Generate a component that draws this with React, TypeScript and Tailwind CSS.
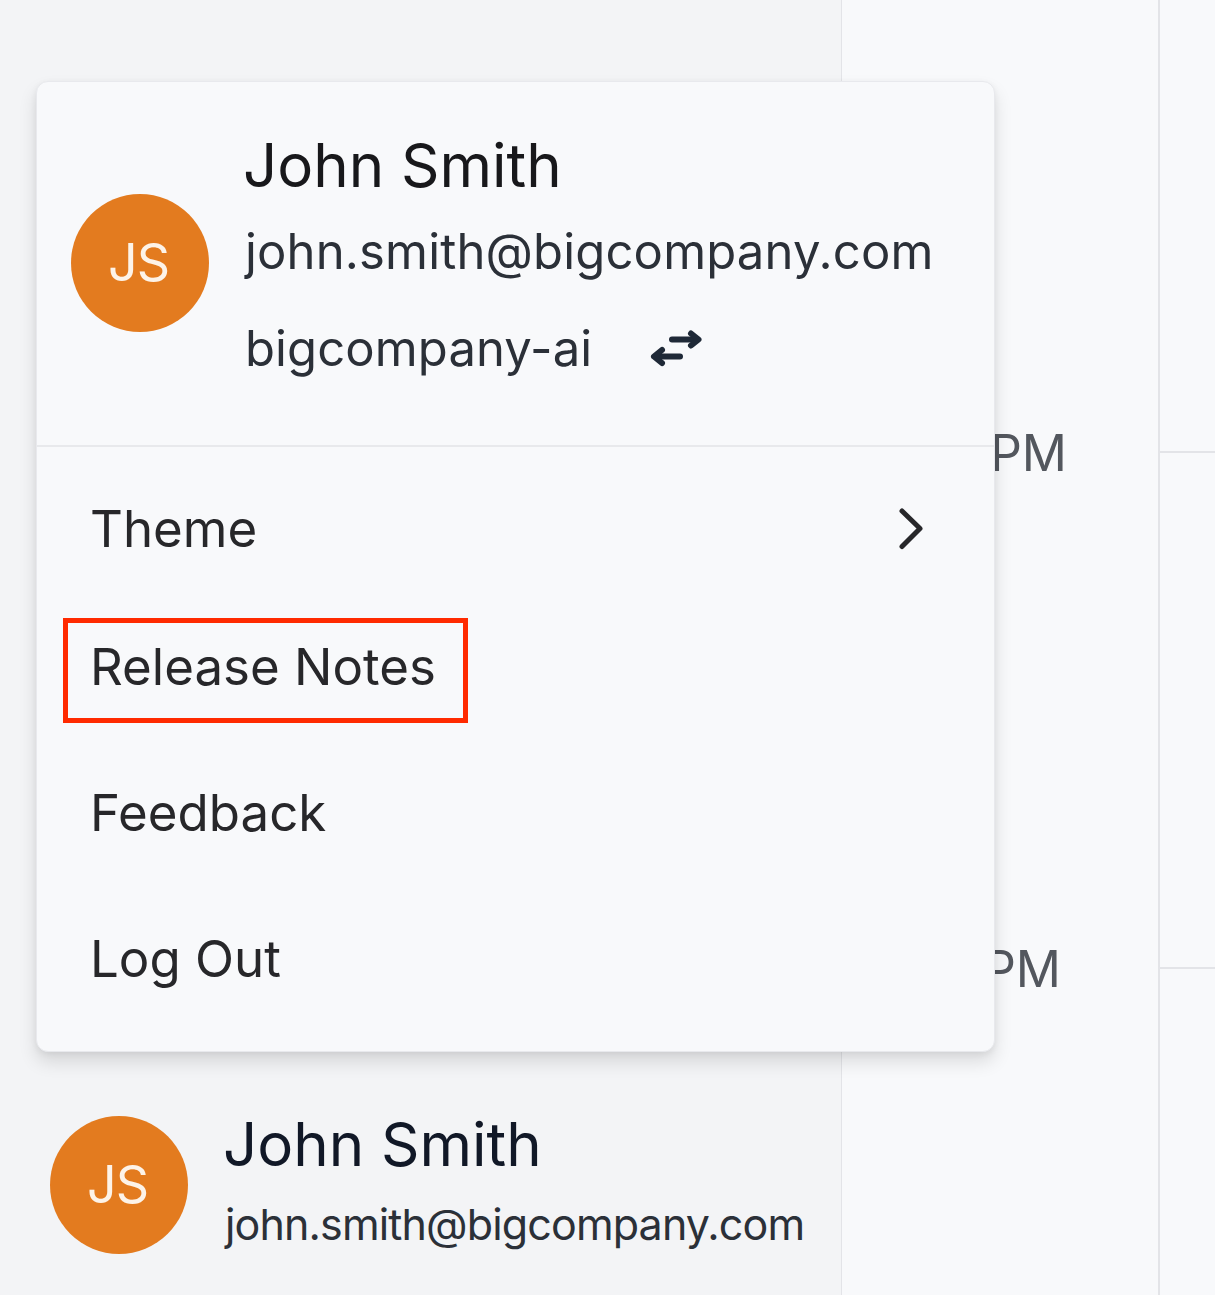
import React from "react";

function Avatar() {
  return (
    <div className="flex h-[138px] w-[138px] shrink-0 items-center justify-center rounded-full bg-[#e37b1f] pr-[3px] text-[52px] tracking-[-1px] text-[#fdf3e8]">
      JS
    </div>
  );
}

function SwapIcon() {
  return (
    <svg width="52" height="42" viewBox="0 0 52 42" fill="none" stroke="#1f2937" strokeWidth="6" strokeLinecap="round" strokeLinejoin="round">
      <path d="M22 9.5 L47 9.5" />
      <path d="M41 3.5 L48.5 9.5 L41 15.5" fill="#1f2937" />
      <path d="M30 26.5 L7 26.5" />
      <path d="M12 20 L4 26.5 L12 33" fill="#1f2937" />
    </svg>
  );
}

function Chevron() {
  return (
    <svg width="24" height="42" viewBox="0 0 24 42" fill="none" stroke="#27272a" strokeWidth="5" strokeLinecap="round" strokeLinejoin="round">
      <path d="M3 3 L21 20.5 L3 38.5" />
    </svg>
  );
}

export default function App() {
  return (
    <div className="relative flex h-[1295px] w-[1215px] overflow-hidden bg-[#f8f9fb] font-['Inter',sans-serif]">
      <aside className="flex w-[842px] shrink-0 flex-col justify-end border-r border-[#e3e4e8] bg-[#f3f4f6]">
        <div className="flex items-center gap-[37px] pb-[41px] pl-[50px]">
          <Avatar />
          <div className="flex flex-col">
            <span className="-ml-[2px] -translate-y-[9px] text-[60px] leading-[70px] text-[#111827]">John Smith</span>
            <span className="mt-[8px] text-[43px] leading-[56px] tracking-[-0.86px] text-[#2b3038]">john.smith@bigcompany.com</span>
          </div>
        </div>
      </aside>
      <main className="flex w-[318px] shrink-0 flex-col border-r-2 border-[#e3e4e8]">
        <div className="flex h-[453px] items-end justify-end pr-[91px] text-[50px] leading-[30px] text-[#53575e]">
          <span className="translate-y-[15px]">12:41 PM</span>
        </div>
        <div className="flex h-[516px] items-end justify-end pr-[97px] text-[50px] leading-[30px] text-[#53575e]">
          <span className="translate-y-[15px]">11:08 PM</span>
        </div>
      </main>
      <section className="flex flex-1 flex-col">
        <div className="h-[453px] border-b-2 border-[#e3e4e8]" />
        <div className="h-[516px] border-b-2 border-[#e3e4e8]" />
      </section>

      <div className="absolute left-[36px] top-[81px] flex h-[971px] w-[959px] flex-col rounded-[12px] border border-[#e8e9ed] bg-[#f8f9fb] shadow-[0_10px_18px_rgba(0,0,0,0.12),0_2px_6px_rgba(0,0,0,0.06)]">
        <div className="flex h-[365px] shrink-0 items-center border-b-2 border-[#e8e9ec] pb-[2px] pl-[34px]">
          <Avatar />
          <div className="ml-[36px] flex flex-col self-start pt-[48px]">
            <span className="-ml-[2px] text-[60px] leading-[70px] text-[#18181b]">John Smith</span>
            <span className="mt-[24px] text-[49px] leading-[56px] tracking-[0.16px] text-[#2b3038]">john.smith@bigcompany.com</span>
            <div className="mt-[41px] flex items-center">
              <span className="text-[49px] leading-[56px] tracking-[0.1px] text-[#2b3038]">bigcompany-ai</span>
              <span className="ml-[58px] translate-y-[2px]"><SwapIcon /></span>
            </div>
          </div>
        </div>
        <div className="flex flex-col pl-[53px] pr-[71px] pt-[50px] text-[51px] leading-[64px] text-[#27272a]">
          <div className="flex items-center justify-between">
            <span>Theme</span>
            <Chevron />
          </div>
          <div className="mt-[74px]">Release Notes</div>
          <div className="mt-[82px]">Feedback</div>
          <div className="mt-[82px]">Log Out</div>
        </div>
      </div>

      <div className="absolute left-[63px] top-[618px] h-[105px] w-[405px] border-[5px] border-[#ff2a00]" />
    </div>
  );
}
